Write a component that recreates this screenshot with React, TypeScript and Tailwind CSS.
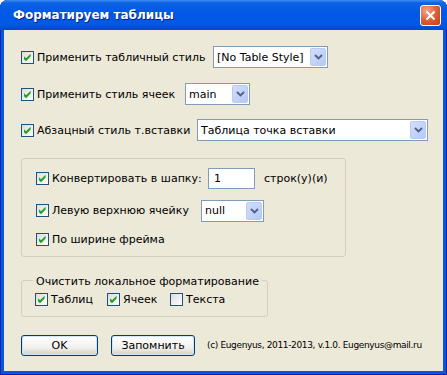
import React from 'react';

const font = { fontFamily: '"DejaVu Sans", "Noto Sans", sans-serif' };

function Check({ checked = true }: { checked?: boolean }) {
  return (
    <svg width="13" height="13" viewBox="0 0 13 13" className="shrink-0">
      <defs>
        <linearGradient id="cbg" x1="0" y1="0" x2="1" y2="1">
          <stop offset="0" stopColor="#DCDCD7" />
          <stop offset="1" stopColor="#FFFFFF" />
        </linearGradient>
      </defs>
      <rect x="0.5" y="0.5" width="12" height="12" fill="url(#cbg)" stroke="#1C5180" />
      {checked && <polygon points="3,5.3 5,7.3 9.6,2.8 9.6,5.6 5,10.2 3,8.2" fill="#21A121" />}
    </svg>
  );
}

function Arrow() {
  return (
    <div className="m-px flex w-[16px] shrink-0 items-center justify-center rounded-[2px] border border-[#B9CBF3] bg-[linear-gradient(135deg,#D2DEFC,#B6C9F5)]">
      <svg width="9" height="6" viewBox="0 0 9 6">
        <polyline points="1,1 4.5,4.5 8,1" fill="none" stroke="#4D6185" strokeWidth="1.8" />
      </svg>
    </div>
  );
}

function Combo({ value, className }: { value: string; className: string }) {
  return (
    <div className={`flex h-[22px] border border-[#7F9DB9] bg-white ${className}`}>
      <span className="flex-1 self-center overflow-hidden whitespace-nowrap pl-[3px]">{value}</span>
      <Arrow />
    </div>
  );
}

function Opt({ label, className, checked = true }: { label: string; className: string; checked?: boolean }) {
  return (
    <label className={`flex items-center gap-[3px] whitespace-nowrap ${className}`}>
      <Check checked={checked} />
      <span>{label}</span>
    </label>
  );
}

function Btn({ label, className }: { label: string; className: string }) {
  return (
    <button className={`h-[21px] rounded-[3px] border border-[#003C74] bg-[linear-gradient(180deg,#FFFFFF_0%,#F2F1EC_60%,#D6D0C5_100%)] text-center shadow-[inset_0_0_0_1px_#CEE7FF] ${className}`}>
      {label}
    </button>
  );
}

export default function App() {
  return (
    <div className="h-[375px] w-[447px] bg-white text-[11px] leading-[13px] text-black" style={font}>
      <div className="flex h-full flex-col overflow-hidden rounded-t-[8px] bg-[#0A55E0] shadow-[inset_1px_0_0_#0029B0,inset_-1px_0_0_#0029B0,inset_0_-1px_0_#0029B0]">
        {/* title bar */}
        <div className="flex h-[30px] shrink-0 items-center bg-[linear-gradient(180deg,#3D8DF5_0%,#0B62E4_10%,#0058E6_45%,#0359E6_80%,#0048CF_100%)] pl-[13px] pr-[6px]">
          <span className="flex-1 text-[12px] font-bold text-white [text-shadow:1px_1px_0_#0A1F80]">
            Форматируем таблицы
          </span>
          <div className="flex h-[21px] w-[21px] items-center justify-center rounded-[3px] border border-white bg-[radial-gradient(circle_at_30%_25%,#F0A48A,#DA5A33_55%,#C1411B)]">
            <svg width="11" height="11" viewBox="0 0 11 11">
              <path d="M1.5 1.5 L9.5 9.5 M9.5 1.5 L1.5 9.5" stroke="white" strokeWidth="2" />
            </svg>
          </div>
        </div>

        {/* client area */}
        <div className="mx-[4px] mb-[4px] flex flex-1 flex-col bg-[#ECE9D8] pl-[17px] pt-[16px]">
          <div className="flex h-[22px] items-center">
            <Opt label="Применить табличный стиль" className="w-[192px]" />
            <Combo value="[No Table Style]" className="w-[115px]" />
          </div>
          <div className="mt-[15px] flex h-[22px] items-center">
            <Opt label="Применить стиль ячеек" className="w-[164px]" />
            <Combo value="main" className="w-[65px]" />
          </div>
          <div className="mt-[14px] flex h-[22px] items-center">
            <Opt label="Абзацный стиль т.вставки" className="w-[176px]" />
            <Combo value="Таблица точка вставки" className="w-[231px]" />
          </div>

          <div className="mt-[17px] flex h-[99px] w-[325px] flex-col rounded-[3px] border border-[#D0D0BF] pl-[14px] pt-[9px]">
            <div className="flex h-[21px] items-center">
              <Opt label="Конвертировать в шапку:" className="w-[172px]" />
              <div className="flex h-[21px] w-[47px] items-center border border-[#7F9DB9] bg-white pl-[5px]">1</div>
              <span className="ml-[9px]">строк(у)(и)</span>
            </div>
            <div className="mt-[11px] flex h-[21px] items-center">
              <Opt label="Левую верхнюю ячейку" className="w-[165px]" />
              <Combo value="null" className="h-[21px] w-[63px]" />
            </div>
            <div className="mt-[7px] flex h-[22px] items-center">
              <Opt label="По ширине фрейма" className="" />
            </div>
          </div>

          <div className="mt-[23px] flex h-[37px] w-[247px] flex-col rounded-[3px] border border-[#D0D0BF]">
            <span className="-mt-[6px] ml-[11px] w-fit bg-[#ECE9D8] px-[3px]">Очистить локальное форматирование</span>
            <div className="mt-[3px] flex h-[16px] items-center pl-[13px]">
              <Opt label="Таблиц" className="w-[72px]" />
              <Opt label="Ячеек" className="w-[63px]" />
              <Opt label="Текста" className="" checked={false} />
            </div>
          </div>

          <div className="mt-[18px] flex h-[21px] items-center">
            <Btn label="OK" className="w-[77px]" />
            <Btn label="Запомнить" className="ml-[13px] w-[84px]" />
            <span className="ml-[12px] text-[9px] tracking-[-0.35px]">(c) Eugenyus, 2011-2013, v.1.0. Eugenyus@mail.ru</span>
          </div>
        </div>
      </div>
    </div>
  );
}
